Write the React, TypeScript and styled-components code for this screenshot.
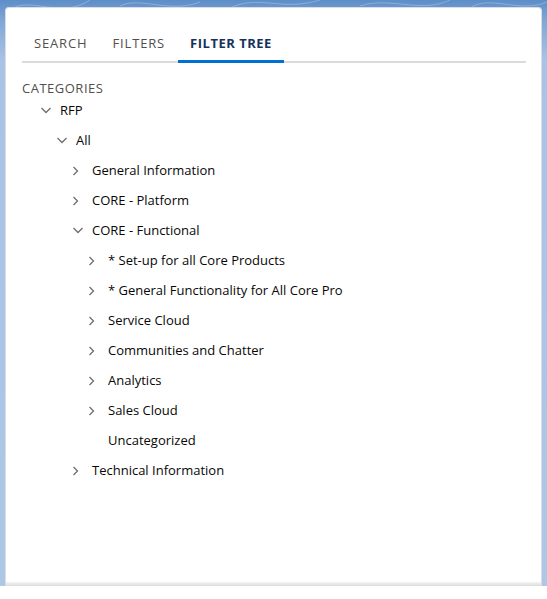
import React from "react";
import styled, { createGlobalStyle } from "styled-components";

const Global = createGlobalStyle`
  html, body { margin: 0; padding: 0; background: #ffffff; }
  body { font-family: "Open Sans", "Liberation Sans", sans-serif; }
`;

const Backdrop = styled.div`
  position: relative;
  height: 586px;
  padding: 7px 5px 0 5px;
  box-sizing: border-box;
  background: linear-gradient(180deg, #5d8ec8 0px, #7fa6d6 20px, #a9c3e5 60px, #aec7e7 100%);
  overflow: hidden;
`;

const Swirls = styled.svg`
  position: absolute;
  left: 0;
  top: 0;
  width: 547px;
  height: 40px;
  pointer-events: none;
`;

const Panel = styled.div`
  position: relative;
  height: 100%;
  background: #ffffff;
  border: 1px solid #d8dde6;
  border-bottom: none;
  border-radius: 4px 4px 0 0;
  box-sizing: border-box;
  padding: 17px 15px 0 16px;
  &::after {
    content: "";
    position: absolute;
    left: 0;
    right: 0;
    bottom: 0;
    height: 4px;
    background: linear-gradient(180deg, #f4f4f4, #dcdcdc);
  }
`;

const TabList = styled.div`
  display: flex;
  border-bottom: 2px solid #dddbda;
`;

const Tab = styled.div<{ $active?: boolean }>`
  height: 38px;
  line-height: 36px;
  padding: 0 12.5px;
  margin-bottom: -2px;
  font-size: 13px;
  letter-spacing: ${(p) => (p.$active ? "0.5px" : "0.85px")};
  text-transform: uppercase;
  font-weight: ${(p) => (p.$active ? 700 : 400)};
  color: ${(p) => (p.$active ? "#16325c" : "#514f4d")};
  box-shadow: ${(p) => (p.$active ? "inset 0 -3px 0 #0070d2" : "none")};
  box-sizing: border-box;
  &:first-child {
    padding-left: 12px;
  }
`;

const Heading = styled.div`
  margin-top: 16px;
  font-size: 13px;
  line-height: 18px;
  letter-spacing: 0.5px;
  text-transform: uppercase;
  color: #514f4d;
`;

const Tree = styled.div`
  display: flex;
  flex-direction: column;
  margin-top: -2px;
`;

const Row = styled.div<{ $level: number }>`
  display: flex;
  align-items: center;
  height: 30px;
  padding-left: ${(p) => p.$level * 16}px;
`;

const Toggle = styled.span<{ $open?: boolean }>`
  width: 16px;
  height: 16px;
  display: flex;
  align-items: center;
  justify-content: ${(p) => (p.$open ? "center" : "flex-start")};
  padding-left: ${(p) => (p.$open ? "0" : "2px")};
  box-sizing: border-box;
  margin-right: 6px;
  flex: none;
`;

const Label = styled.span`
  font-size: 13px;
  color: #080707;
  white-space: nowrap;
`;

type Node = { label: string; level: number; state: "open" | "closed" | "leaf" };

const nodes: Node[] = [
  { label: "RFP", level: 1, state: "open" },
  { label: "All", level: 2, state: "open" },
  { label: "General Information", level: 3, state: "closed" },
  { label: "CORE - Platform", level: 3, state: "closed" },
  { label: "CORE - Functional", level: 3, state: "open" },
  { label: "* Set-up for all Core Products", level: 4, state: "closed" },
  { label: "* General Functionality for All Core Pro", level: 4, state: "closed" },
  { label: "Service Cloud", level: 4, state: "closed" },
  { label: "Communities and Chatter", level: 4, state: "closed" },
  { label: "Analytics", level: 4, state: "closed" },
  { label: "Sales Cloud", level: 4, state: "closed" },
  { label: "Uncategorized", level: 4, state: "leaf" },
  { label: "Technical Information", level: 3, state: "closed" },
];

const Chevron = ({ open }: { open: boolean }) =>
  open ? (
    <svg width="12" height="8" viewBox="0 0 12 8">
      <polyline points="1.5,2 6,6.5 10.5,2" fill="none" stroke="#706e6b" strokeWidth="1.3" />
    </svg>
  ) : (
    <svg width="8" height="12" viewBox="0 0 8 12">
      <polyline points="1.5,3 5.5,7 1.5,11" fill="none" stroke="#706e6b" strokeWidth="1.3" />
    </svg>
  );

export default function App() {
  return (
    <>
      <Global />
      <Backdrop>
        <Swirls viewBox="0 0 547 40">
          <g fill="none" stroke="rgba(255,255,255,0.25)" strokeWidth="1">
            <path d="M10 10 C30 -5 60 20 90 0" />
            <path d="M120 6 C140 -4 170 14 200 2" />
            <path d="M230 8 C260 -6 280 12 320 0" />
            <path d="M360 6 C390 -4 420 14 450 0" />
            <path d="M470 8 C490 -6 520 14 547 2" />
          </g>
        </Swirls>
        <Panel>
          <TabList>
            <Tab>Search</Tab>
            <Tab>Filters</Tab>
            <Tab $active>Filter Tree</Tab>
          </TabList>
          <Heading>Categories</Heading>
          <Tree>
            {nodes.map((n) => (
              <Row key={n.label} $level={n.level}>
                <Toggle $open={n.state === "open"}>
                  {n.state !== "leaf" && <Chevron open={n.state === "open"} />}
                </Toggle>
                <Label>{n.label}</Label>
              </Row>
            ))}
          </Tree>
        </Panel>
      </Backdrop>
    </>
  );
}
